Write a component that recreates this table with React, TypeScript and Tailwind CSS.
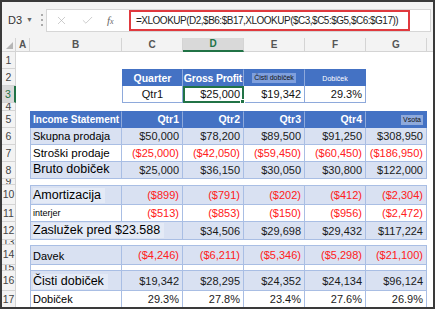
import React from "react";
import { X, Check } from "lucide-react";

type Row = {
  n: string;
  h: string;
  kind: "gap" | "head" | "data" | "blank";
  label?: React.ReactNode;
  vals?: string[];
  red?: boolean;
  band?: boolean;
  top?: boolean;
  span?: boolean;
};

const GRID = "grid grid-cols-[14px_14px_92px_61px_61px_61px_61px_61px_1fr]";

function RowHead({ n, active }: { n: string; active?: boolean }) {
  return (
    <div
      className={
        active
          ? "flex items-center justify-center overflow-hidden border-b border-r-2 border-b-[#d4d4d4] border-r-[#217346] bg-[#d9d9d9] text-[10.5px] leading-none text-[#217346]"
          : "flex items-center justify-center overflow-hidden border-b border-r border-[#d4d4d4] bg-[#f3f3f3] text-[10.5px] leading-none text-[#444]"
      }
    >
      {n}
    </div>
  );
}

const rows: Row[] = [
  { n: "6", h: "h-[17px]", kind: "data", band: true, label: <span className="text-[11px]">Skupna prodaja</span>, vals: ["$50,000", "$78,200", "$89,500", "$91,250", "$308,950"] },
  { n: "7", h: "h-[17px]", kind: "data", label: <span className="text-[11.5px]">Stroški prodaje</span>, red: true, vals: ["($25,000)", "($42,050)", "($59,450)", "($60,450)", "($186,950)"] },
  { n: "8", h: "h-[17px]", kind: "data", band: true, label: <span className="text-[12.5px] leading-[15px]">Bruto dobiček</span>, vals: ["$25,000", "$36,150", "$30,050", "$30,800", "$122,000"] },
  { n: "9", h: "h-[6px]", kind: "gap" },
  { n: "10", h: "h-[20px]", kind: "data", band: true, top: true, label: <span className="bg-[#e4eaf6] pr-1 text-[12.5px] leading-[15px]">Amortizacija</span>, red: true, vals: ["($899)", "($791)", "($202)", "($412)", "($2,304)"] },
  { n: "11", h: "h-[17px]", kind: "data", label: <span className="text-[9px]">interjer</span>, red: true, vals: ["($513)", "($853)", "($150)", "($956)", "($2,472)"] },
  { n: "12", h: "h-[18px]", kind: "data", band: true, span: true, label: <span className="bg-[#e4eaf6] pr-1 text-[12.5px] leading-[15px]">Zaslužek pred $23.588</span>, vals: ["", "$34,506", "$29,698", "$29,432", "$117,224"] },
  { n: "13", h: "h-[5px]", kind: "gap" },
  { n: "14", h: "h-[20px]", kind: "data", band: true, top: true, label: <span className="text-[11px]">Davek</span>, red: true, vals: ["($4,246)", "($6,211)", "($5,346)", "($5,298)", "($21,100)"] },
  { n: "15", h: "h-[6px]", kind: "blank" },
  { n: "16", h: "h-[20px]", kind: "data", band: true, label: <span className="bg-[#e4eaf6] pr-1 text-[12.5px] leading-[15px]">Čisti dobiček</span>, vals: ["$19,342", "$28,295", "$24,352", "$24,134", "$96,124"] },
  { n: "17", h: "h-[17px]", kind: "data", label: <span className="text-[11px]">Dobiček</span>, vals: ["29.3%", "27.8%", "23.4%", "27.6%", "26.9%"] },
];

function TableRow({ r }: { r: Row }) {
  if (r.kind === "gap") {
    return (
      <div className={`${GRID} ${r.h}`}>
        <RowHead n={r.n} />
        <div />
      </div>
    );
  }
  const bg = r.band ? "bg-[#d9e1f2]" : "bg-white";
  const bt = r.top ? "border-t" : "";
  if (r.kind === "blank") {
    return (
      <div className={`${GRID} ${r.h}`}>
        <RowHead n={r.n} />
        <div />
        {[0, 1, 2, 3, 4, 5].map((i) => (
          <div key={i} className={`border-b border-r border-[#a9bee4] bg-white ${i === 0 ? "border-l" : ""}`} />
        ))}
        <div />
      </div>
    );
  }
  const vals = r.vals || [];
  return (
    <div className={`${GRID} ${r.h}`}>
      <RowHead n={r.n} />
      <div />
      <div
        className={`${r.span ? "col-span-2" : ""} flex items-end overflow-hidden whitespace-nowrap border-b border-l border-r border-[#a9bee4] pb-[1px] pl-[2px] leading-[14px] text-black ${bg} ${bt}`}
      >
        {r.label}
      </div>
      {vals.map((v, i) =>
        r.span && i === 0 ? null : (
          <div
            key={i}
            className={`flex items-center justify-end overflow-hidden whitespace-nowrap border-b border-r border-[#a9bee4] pr-[3px] text-[11px] leading-[14px] ${bg} ${bt} ${r.red ? "text-[#ff2020]" : "text-[#1a1a1a]"}`}
          >
            {v}
          </div>
        )
      )}
      <div />
    </div>
  );
}

export default function App() {
  const cols = ["A", "B", "C", "D", "E", "F", "G"];
  return (
    <div className="h-[309px] w-[435px] overflow-hidden border-2 border-[#3a3a3a] bg-white font-['Liberation_Sans',Arial,sans-serif]">
      {/* formula bar */}
      <div className="flex h-[36px] items-center bg-[#f3f3f3] pl-[4px] pr-[2px]">
        <div className="flex h-[20px] w-[32px] items-center gap-[4px] pl-[2px] text-[11px] text-[#333]">
          <span>D3</span>
          <span className="text-[7px] text-[#666]">▼</span>
        </div>
        <div className="mx-[2px] flex h-[16px] w-[3px] flex-col items-center justify-between py-[2px]">
          <span className="h-[2px] w-[2px] bg-[#aaa]" />
          <span className="h-[2px] w-[2px] bg-[#aaa]" />
          <span className="h-[2px] w-[2px] bg-[#aaa]" />
        </div>
        <div className="ml-[1px] flex h-[23px] flex-1 items-center border border-[#d6d6d6] bg-white">
          <div className="flex w-[82px] items-center pl-[8px]">
            <X size={13} strokeWidth={1.3} className="text-[#b8b8b8]" />
            <Check size={13} strokeWidth={1.3} className="ml-[13px] text-[#b8b8b8]" />
            <span className="ml-[13px] font-['Liberation_Serif',serif] text-[11px] italic text-[#666]">
              f<span className="text-[8px]">x</span>
            </span>
          </div>
          <div className="flex h-[21px] w-[281px] items-center overflow-hidden whitespace-nowrap border-2 border-[#e0393e] pl-[5px] text-[10px] tracking-[-0.5px] text-[#222]">
            =XLOOKUP(D2,$B6:$B17,XLOOKUP($C3,$C5:$G5,$C6:$G17))
          </div>
        </div>
      </div>
      {/* column headers */}
      <div className={`${GRID} h-[14px] bg-[#f3f3f3]`}>
        <div className="relative border-b border-r border-[#d4d4d4]">
          <div className="absolute bottom-[2px] right-[2px] h-0 w-0 border-b-[7px] border-l-[7px] border-b-[#b5b5b5] border-l-transparent" />
        </div>
        {cols.map((c) => (
          <div
            key={c}
            className={
              c === "D"
                ? "flex items-center justify-center border-b-2 border-r border-b-[#217346] border-r-[#d4d4d4] bg-[#d9d9d9] text-[10px] font-bold leading-none text-[#217346]"
                : "flex items-center justify-center border-b border-r border-[#d4d4d4] text-[10px] font-bold leading-none text-[#555]"
            }
          >
            {c}
          </div>
        ))}
        <div className="border-b border-[#d4d4d4]" />
      </div>
      {/* row 1 */}
      <div className={`${GRID} h-[17px]`}>
        <RowHead n="1" />
      </div>
      {/* row 2 */}
      <div className={`${GRID} h-[17px]`}>
        <RowHead n="2" />
        <div />
        <div />
        <div className="flex items-center justify-center whitespace-nowrap border-l border-r border-t border-[#4472c4] border-r-[#8ea9db] bg-[#4472c4] text-[10.5px] font-bold leading-none text-white">
          Quarter
        </div>
        <div className="flex items-center justify-center whitespace-nowrap border-r border-t border-[#4472c4] border-r-[#8ea9db] bg-[#4472c4] text-[10.5px] font-bold leading-none tracking-[-0.2px] text-white">
          Gross Profit
        </div>
        <div className="flex items-center justify-center border-r border-t border-[#4472c4] border-r-[#8ea9db] bg-[#4472c4]">
          <span className="whitespace-nowrap bg-[#7f9fdd] px-[2px] text-[7px] leading-[10px] text-[#111]">Čisti dobiček</span>
        </div>
        <div className="flex items-center justify-center whitespace-nowrap border-r border-t border-[#4472c4] bg-[#4472c4] text-[7px] leading-none text-white">
          Dobiček
        </div>
      </div>
      {/* row 3 */}
      <div className={`${GRID} h-[17px]`}>
        <RowHead n="3" active />
        <div />
        <div />
        <div className="flex items-center justify-center border-b border-l border-r border-[#8ea9db] bg-white text-[11px] leading-none text-[#111]">
          Qtr1
        </div>
        <div className="relative flex items-center justify-end border-2 border-[#217346] bg-white pr-[2px] text-[11px] leading-none text-[#111]">
          $25,000
          <div className="absolute -bottom-[3px] -right-[3px] h-[5px] w-[5px] border border-white bg-[#217346]" />
        </div>
        <div className="flex items-center justify-end border-b border-r border-[#8ea9db] bg-white pr-[3px] text-[11px] leading-none text-[#111]">
          $19,342
        </div>
        <div className="flex items-center justify-end border-b border-r border-[#8ea9db] bg-white pr-[3px] text-[11px] leading-none text-[#111]">
          29.3%
        </div>
      </div>
      {/* row 4 */}
      <div className={`${GRID} h-[8px]`}>
        <RowHead n="4" />
      </div>
      {/* row 5 header */}
      <div className={`${GRID} h-[17px]`}>
        <RowHead n="5" />
        <div />
        <div className="flex items-center whitespace-nowrap border-b border-l border-r border-t border-[#4472c4] border-r-[#8ea9db] bg-[#4472c4] pl-[2px] text-[10px] font-bold leading-none text-white">
          Income Statement
        </div>
        {["Qtr1", "Qtr2", "Qtr3", "Qtr4"].map((q) => (
          <div
            key={q}
            className="flex items-center justify-end whitespace-nowrap border-b border-r border-t border-[#4472c4] border-r-[#8ea9db] bg-[#4472c4] pr-[3px] text-[10.5px] font-bold leading-none text-white"
          >
            {q}
          </div>
        ))}
        <div className="flex items-center justify-end border-b border-r border-t border-[#4472c4] bg-[#4472c4] pr-[3px]">
          <span className="whitespace-nowrap bg-[#8ea9db] px-[2px] text-[7px] leading-[10px] text-[#111]">Vsota</span>
        </div>
        <div />
      </div>
      {rows.map((r) => (
        <TableRow key={r.n} r={r} />
      ))}
      <div className={`${GRID} h-[4px]`}>
        <RowHead n="" />
      </div>
    </div>
  );
}
